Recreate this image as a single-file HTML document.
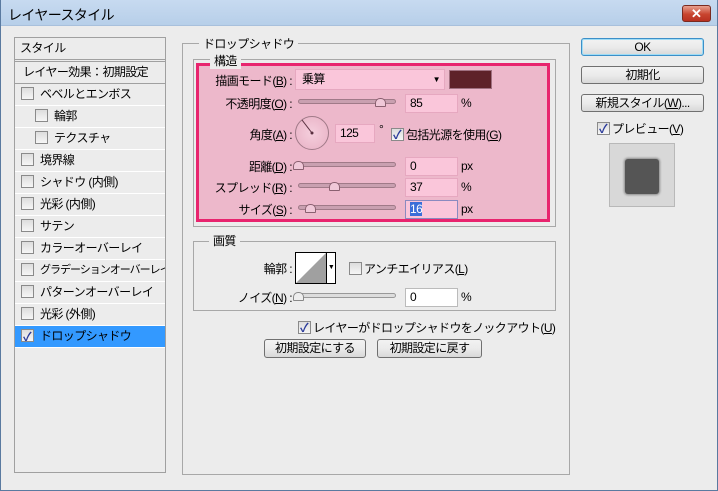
<!DOCTYPE html>
<html><head><meta charset="utf-8"><style>
*{box-sizing:border-box;margin:0;padding:0}
body{width:718px;height:491px;overflow:hidden;background:#ececec;font-family:"Liberation Sans","Noto Sans CJK JP",sans-serif;font-size:12px;letter-spacing:-0.6px;color:#000;position:relative}
.a{position:absolute;white-space:nowrap}
.title{left:0;top:0;width:718px;height:26px;background:linear-gradient(#c7daf0,#b7cfe9);border-bottom:1px solid #a8c0dc}
.win{left:0;top:0;width:718px;height:491px;border:1px solid #5a7aa0;border-top:none}
.close{left:682px;top:5px;width:29px;height:17px;border:1px solid #7a2a20;border-radius:3px;background:linear-gradient(#e8a090,#c8452f 55%,#b83020);color:#fff;font-weight:bold;font-size:13px;text-align:center;line-height:15px;letter-spacing:0}
.panel{left:14px;top:37px;width:152px;height:436px;border:1px solid #a0a0a0;background:#ececec;overflow:hidden}
.row{position:absolute;left:0;width:150px;height:22px;border-bottom:1px solid #fff;line-height:21px;white-space:nowrap}
.cb{display:inline-block;width:13px;height:13px;border:1px solid #8a8a8a;background:linear-gradient(#ddd,#f6f6f6);vertical-align:middle;position:relative;top:-1px;margin-right:6px}
.cbk::after{content:"✓";position:absolute;left:1px;top:-3px;font-size:12px;color:#2a3a9a;font-weight:bold}
.grp{border:1px solid #a8a8a8}
.lbl{background:#ececec;padding:0 4px}
.pink{left:196px;top:63px;width:354px;height:159px;background:#edb8cb;border:3px solid #e8246e}
.slider{position:absolute;height:5px;border:1px solid #a07a88;border-radius:3px;background:#c9a0b0}
.thumb{position:absolute;width:11px;height:9px;border:1px solid #8a6070;background:#f0c8d8;border-radius:5px 5px 1px 1px}
.inp{position:absolute;height:19px;background:#fac6da;border:1px solid #e6a8c0;padding-left:4px;line-height:17px}
.r{text-align:right}
.btn{position:absolute;height:19px;border:1px solid #707070;border-radius:3px;background:linear-gradient(#f2f2f2,#ebebeb 50%,#d8d8d8);text-align:center;line-height:17px}
u{text-decoration:underline}
</style></head><body>
<div class="a title"></div>
<div class="a win"></div>
<div class="a" style="left:8px;top:5px;font-size:14px;color:#000">レイヤースタイル</div>
<div class="a close">✕</div>

<div class="a panel">
 <div class="row" style="top:0;height:24px;border-bottom:3px double #a0a0a0;padding-left:5px">スタイル</div>
 <div class="row" style="top:24px;height:22px;padding-left:8px;border-bottom:1px solid #a0a0a0">レイヤー効果：初期設定</div>
 <div class="row" style="top:46px;padding-left:6px"><span class="cb"></span>ベベルとエンボス</div>
 <div class="row" style="top:68px;padding-left:20px"><span class="cb"></span>輪郭</div>
 <div class="row" style="top:90px;padding-left:20px"><span class="cb"></span>テクスチャ</div>
 <div class="row" style="top:112px;padding-left:6px"><span class="cb"></span>境界線</div>
 <div class="row" style="top:134px;padding-left:6px"><span class="cb"></span>シャドウ (内側)</div>
 <div class="row" style="top:156px;padding-left:6px"><span class="cb"></span>光彩 (内側)</div>
 <div class="row" style="top:178px;padding-left:6px"><span class="cb"></span>サテン</div>
 <div class="row" style="top:200px;padding-left:6px"><span class="cb"></span>カラーオーバーレイ</div>
 <div class="row" style="top:222px;padding-left:6px;font-size:11px;letter-spacing:-1px"><span class="cb"></span>グラデーションオーバーレイ</div>
 <div class="row" style="top:244px;padding-left:6px"><span class="cb"></span>パターンオーバーレイ</div>
 <div class="row" style="top:266px;padding-left:6px"><span class="cb"></span>光彩 (外側)</div>
 <div class="row" style="top:288px;padding-left:6px;background:#3399ff;color:#000"><span class="cb cbk"></span>ドロップシャドウ</div>
</div>

<div class="a grp" style="left:182px;top:43px;width:388px;height:432px"></div>
<div class="a lbl" style="left:199px;top:35px">ドロップシャドウ</div>
<div class="a grp" style="left:193px;top:59px;width:363px;height:168px"></div>
<div class="a pink"></div>
<div class="a lbl" style="left:210px;top:52px;background:#ececec">構造</div>

<div class="a r" style="left:200px;top:72px;width:92px">描画モード(<u>B</u>) :</div>
<div class="a" style="left:295px;top:69px;width:150px;height:21px;background:#fac6da;border:1px solid #e6a8c0;padding-left:6px;line-height:19px">乗算<span style="position:absolute;right:4px;top:0;font-size:8px">▼</span></div>
<div class="a" style="left:449px;top:70px;width:43px;height:19px;background:#5e2229;border:1px solid #a07080"></div>

<div class="a r" style="left:200px;top:95px;width:92px">不透明度(<u>O</u>) :</div>
<div class="slider" style="left:298px;top:99px;width:98px"></div><div class="thumb" style="left:375px;top:98px"></div>
<div class="inp" style="left:405px;top:94px;width:53px">85</div><div class="a" style="left:461px;top:96px">%</div>

<div class="a r" style="left:200px;top:126px;width:92px">角度(<u>A</u>) :</div>
<div class="a" style="left:295px;top:116px;width:34px;height:34px;border:1px solid #a07a88;border-radius:50%;background:radial-gradient(#f5cfdd,#e8b0c4)"></div>
<svg class="a" style="left:295px;top:116px" width="34" height="34"><line x1="17" y1="17" x2="7" y2="4" stroke="#5a3040" stroke-width="1"/><circle cx="17" cy="17" r="1.5" fill="#5a3040"/></svg>
<div class="inp" style="left:335px;top:124px;width:40px">125</div><div class="a" style="left:379px;top:122px">°</div>
<div class="a" style="left:391px;top:126px"><span class="cb cbk" style="margin-right:2px"></span>包括光源を使用(<u>G</u>)</div>

<div class="a r" style="left:200px;top:158px;width:92px">距離(<u>D</u>) :</div>
<div class="slider" style="left:298px;top:162px;width:98px"></div><div class="thumb" style="left:293px;top:161px"></div>
<div class="inp" style="left:405px;top:157px;width:53px">0</div><div class="a" style="left:461px;top:159px">px</div>

<div class="a r" style="left:200px;top:179px;width:92px">スプレッド(<u>R</u>) :</div>
<div class="slider" style="left:298px;top:183px;width:98px"></div><div class="thumb" style="left:329px;top:182px"></div>
<div class="inp" style="left:405px;top:178px;width:53px">37</div><div class="a" style="left:461px;top:180px">%</div>

<div class="a r" style="left:200px;top:201px;width:92px">サイズ(<u>S</u>) :</div>
<div class="slider" style="left:298px;top:205px;width:98px"></div><div class="thumb" style="left:305px;top:204px"></div>
<div class="inp" style="left:405px;top:200px;width:53px;border-color:#8a8ac0"><span style="background:#3a6ed8;color:#fff">16</span></div><div class="a" style="left:461px;top:202px">px</div>

<div class="a grp" style="left:193px;top:241px;width:363px;height:70px"></div>
<div class="a lbl" style="left:209px;top:232px">画質</div>
<div class="a r" style="left:200px;top:260px;width:92px">輪郭 :</div>
<div class="a" style="left:295px;top:252px;width:41px;height:32px;border:1px solid #000;background:#fff"></div>
<svg class="a" style="left:296px;top:253px" width="30" height="30"><polygon points="0,30 30,0 30,30" fill="#a0a0a0"/></svg>
<div class="a" style="left:326px;top:253px;width:9px;height:30px;border-left:1px solid #000;background:#fff;font-size:7px;text-align:center;line-height:30px">▼</div>
<div class="a" style="left:349px;top:260px"><span class="cb" style="margin-right:2px"></span>アンチエイリアス(<u>L</u>)</div>
<div class="a r" style="left:200px;top:289px;width:92px">ノイズ(<u>N</u>) :</div>
<div class="slider" style="left:298px;top:293px;width:98px;background:#ddd;border-color:#999"></div><div class="thumb" style="left:293px;top:292px;background:#eee;border-color:#888"></div>
<div class="inp" style="left:405px;top:288px;width:53px;background:#fff;border-color:#bbb">0</div><div class="a" style="left:461px;top:290px">%</div>

<div class="a" style="left:298px;top:319px"><span class="cb cbk" style="margin-right:2px"></span>レイヤーがドロップシャドウをノックアウト(<u>U</u>)</div>
<div class="btn" style="left:264px;top:339px;width:102px">初期設定にする</div>
<div class="btn" style="left:377px;top:339px;width:105px">初期設定に戻す</div>

<div class="btn" style="left:581px;top:38px;width:123px;height:18px;border-color:#3c8fc8;box-shadow:inset 0 0 0 1px #9fdcf5;line-height:16px">OK</div>
<div class="btn" style="left:581px;top:66px;width:123px;height:18px;line-height:16px">初期化</div>
<div class="btn" style="left:581px;top:94px;width:123px;height:18px;line-height:16px">新規スタイル(<u>W</u>)...</div>
<div class="a" style="left:597px;top:120px"><span class="cb cbk" style="margin-right:2px"></span>プレビュー(<u>V</u>)</div>
<div class="a" style="left:609px;top:143px;width:66px;height:64px;border:1px solid #b8b8b8;background:#d8d8d8"></div>
<div class="a" style="left:625px;top:159px;width:34px;height:35px;background:#555;border-radius:3px;box-shadow:0 0 2px 1px #888"></div>
</body></html>
